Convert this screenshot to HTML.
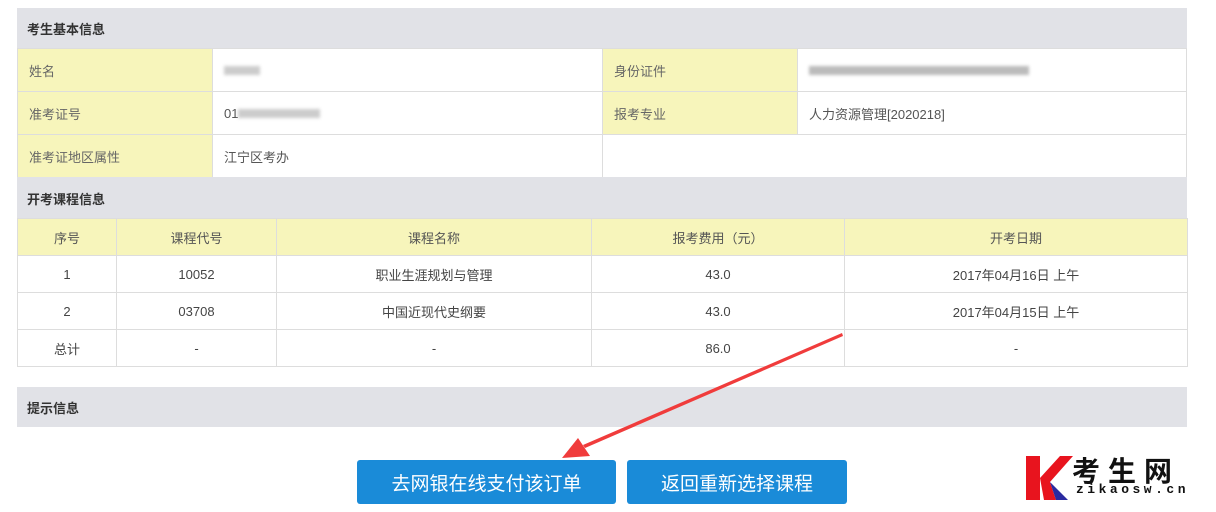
<!DOCTYPE html>
<html><head><meta charset="utf-8"><style>
body{margin:0;background:#fff;width:1216px;height:512px;overflow:hidden;font-family:"Liberation Sans","Noto Sans CJK SC",sans-serif;font-size:14px;color:#333;position:relative}
.a{position:absolute;box-sizing:border-box}
.h{background:#e1e2e7;font-weight:bold;font-size:13px;color:#333;padding-left:10px;display:flex;align-items:center}
.c{border:1px solid #ddd;display:flex;align-items:center;padding-left:11px;color:#555;font-size:13px}
.y{background:#f7f5bb;color:#666}
.t{justify-content:center;padding-left:0}
.b{background:#1a8bd8;color:#fff;font-size:19px;border-radius:3px;display:flex;align-items:center;justify-content:center}
.blur{display:inline-block;height:9px;background:#ccc;filter:blur(1.5px)}
</style></head><body>
<div class="a h" style="left:17px;top:8px;width:1170px;height:41px">考生基本信息</div>
<div class="a c y" style="left:17px;top:48px;width:196px;height:44px">姓名</div>
<div class="a c" style="left:212px;top:48px;width:391px;height:44px"><span class="blur" style="width:36px"></span></div>
<div class="a c y" style="left:602px;top:48px;width:196px;height:44px">身份证件</div>
<div class="a c" style="left:797px;top:48px;width:390px;height:44px"><span class="blur" style="width:220px;background:#bbb"></span></div>
<div class="a c y" style="left:17px;top:91px;width:196px;height:44px">准考证号</div>
<div class="a c" style="left:212px;top:91px;width:391px;height:44px">01<span class="blur" style="width:82px"></span></div>
<div class="a c y" style="left:602px;top:91px;width:196px;height:44px">报考专业</div>
<div class="a c" style="left:797px;top:91px;width:390px;height:44px">人力资源管理[2020218]</div>
<div class="a c y" style="left:17px;top:134px;width:196px;height:44px">准考证地区属性</div>
<div class="a c" style="left:212px;top:134px;width:391px;height:44px">江宁区考办</div>
<div class="a c" style="left:602px;top:134px;width:585px;height:44px"></div>
<div class="a h" style="left:17px;top:177px;width:1170px;height:42px">开考课程信息</div>
<div id="tb"></div>
<div class="a h" style="left:17px;top:387px;width:1170px;height:40px">提示信息</div>
<div class="a b" style="left:357px;top:460px;width:259px;height:44px">去网银在线支付该订单</div>
<div class="a b" style="left:627px;top:460px;width:220px;height:44px">返回重新选择课程</div>
<svg class="a" style="left:0;top:0" width="1216" height="512">
<polygon points="842,333 843,336 585,448 583,445" fill="#f03c3c"/>
<polygon points="562,458 578,438 590,456" fill="#f03c3c"/>
<polygon points="1026,456 1040,456 1040,500 1026,500" fill="#e8141e"/>
<polygon points="1040,478 1060,456 1073,456 1050,482 1056,500 1044,500" fill="#e8141e"/>
<polygon points="1050,482 1068,500 1056,500" fill="#2a2aa0"/>
</svg>
<div class="a" style="left:1072px;top:450px;font-size:28px;font-weight:bold;letter-spacing:8px;color:#111;font-family:'Noto Sans CJK SC',sans-serif">考生网</div>
<div class="a" style="left:1076px;top:482px;font-size:13px;letter-spacing:3.5px;color:#111;font-family:'Liberation Mono',monospace;font-weight:bold">zikaosw.cn</div>
<script>
var cols=[17,116,276,591,844,1187],rows=[218,255,292,329,366];
var d=[["序号","课程代号","课程名称","报考费用（元）","开考日期"],["1","10052","职业生涯规划与管理","43.0","2017年04月16日 上午"],["2","03708","中国近现代史纲要","43.0","2017年04月15日 上午"],["总计","-","-","86.0","-"]];
var h="";for(var r=0;r<4;r++)for(var c=0;c<5;c++)h+='<div class="a c t'+(r==0?' y':'')+'" style="left:'+cols[c]+'px;top:'+rows[r]+'px;width:'+(cols[c+1]-cols[c]+1)+'px;height:'+(rows[r+1]-rows[r]+1)+'px;color:'+(r==0?'#555':'#444')+'">'+d[r][c]+'</div>';
document.getElementById("tb").innerHTML=h;
</script>
</body></html>
